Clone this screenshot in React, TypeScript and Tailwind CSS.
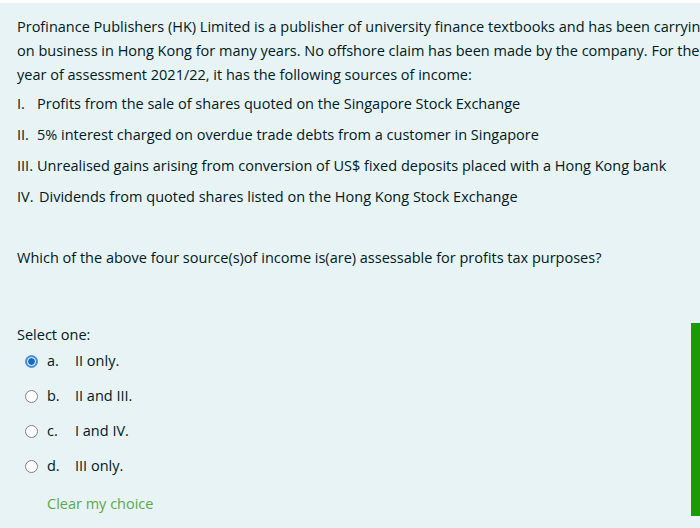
import React from 'react';

const lines = [
  'Profinance Publishers (HK) Limited is a publisher of university finance textbooks and has been carrying',
  'on business in Hong Kong for many years. No offshore claim has been made by the company. For the',
  'year of assessment 2021/22, it has the following sources of income:',
];

const sources = [
  { num: 'I.', w: 'w-[20px]', text: 'Profits from the sale of shares quoted on the Singapore Stock Exchange' },
  { num: 'II.', w: 'w-[20px]', text: '5% interest charged on overdue trade debts from a customer in Singapore' },
  { num: 'III.', w: 'w-[20px]', text: 'Unrealised gains arising from conversion of US$ fixed deposits placed with a Hong Kong bank' },
  { num: 'IV.', w: 'w-[22px]', text: 'Dividends from quoted shares listed on the Hong Kong Stock Exchange' },
];

const options = [
  { key: 'a.', text: 'II only.', checked: true },
  { key: 'b.', text: 'II and III.', checked: false },
  { key: 'c.', text: 'I and IV.', checked: false },
  { key: 'd.', text: 'III only.', checked: false },
];

const Radio: React.FC<{ checked: boolean }> = ({ checked }) =>
  checked ? (
    <span className="flex h-[13px] w-[13px] items-center justify-center rounded-full border border-[#4a90e2] bg-[#4a90e2]">
      <span className="h-[9px] w-[9px] rounded-full border-[1.5px] border-white bg-[#0f6cbf]"></span>
    </span>
  ) : (
    <span className="h-[13px] w-[13px] rounded-full border-[1.5px] border-[#808080] bg-white"></span>
  );

export default function App() {
  return (
    <div className="h-[528px] w-[700px] overflow-hidden bg-white font-['Open_Sans',sans-serif] text-[14.5px] text-[#001a1e]">
      <div className="relative mt-[3px] h-[525px] bg-[#e7f3f5] pl-[17px] pt-[12px]">
        <div className="whitespace-nowrap leading-[24px]">
          {lines.map((l, i) => (
            <div key={i}>{l}</div>
          ))}
        </div>

        <div className="mt-[5px] flex flex-col gap-[7px] leading-[24px]">
          {sources.map((s) => (
            <div key={s.num} className="flex whitespace-nowrap">
              <span className={s.w}>{s.num}</span>
              <span>{s.text}</span>
            </div>
          ))}
        </div>

        <p className="mt-[37px] leading-[24px]">
          Which of the above four source(s)of income is(are) assessable for profits tax purposes?
        </p>

        <p className="mt-[53px] leading-[24px]">Select one:</p>

        <div className="mt-[2px] flex flex-col gap-[11px] pl-[8px] leading-[24px]">
          {options.map((o) => (
            <div key={o.key} className="flex items-center">
              <Radio checked={o.checked} />
              <span className="ml-[9px] w-[28px]">{o.key}</span>
              <span>{o.text}</span>
            </div>
          ))}
        </div>

        <div className="mt-[14px] pl-[30px] leading-[24px] text-[#5ea64b]">Clear my choice</div>

        <div className="absolute right-0 top-[320px] h-[193px] w-[9px] bg-[#1a9b06]"></div>
      </div>
    </div>
  );
}
